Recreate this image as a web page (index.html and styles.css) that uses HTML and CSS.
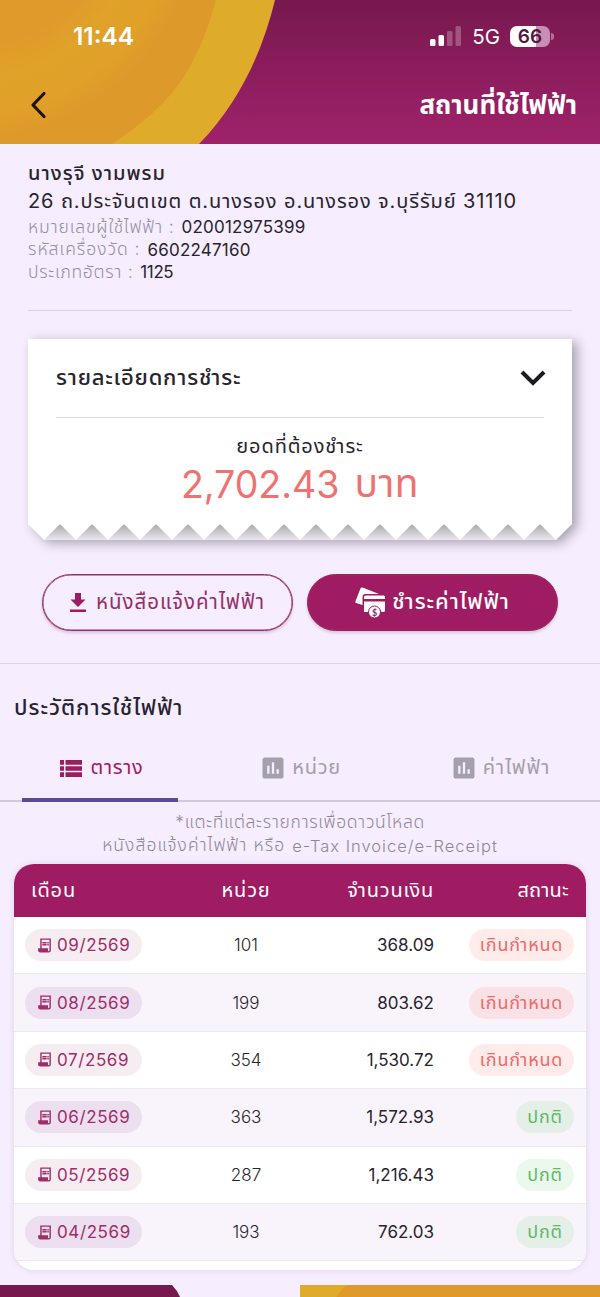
FILE: index.html
```html
<!DOCTYPE html>
<html lang="th">
<head>
<meta charset="utf-8">
<title>สถานที่ใช้ไฟฟ้า</title>
<link rel="stylesheet" href="styles.css">
</head>
<body>
<svg class="defs" width="0" height="0">
  <symbol id="bill" viewBox="0 0 24 24"><path fill="currentColor" d="M6 2H21V19Q21 22 18 22H6Q3 22 3 19V16H6ZM8 4V16H17V19Q17 20 18 20T19 19V4ZM9 7h6v2H9zm7 0h2v2h-2zm-7 3h6v2H9zm7 0h2v2h-2z"/></symbol>
  <symbol id="chart" viewBox="0 0 24 24"><path fill="currentColor" d="M19 3H5c-1.100 0-2 .9-2 2v14c0 1.100.9 2 2 2h14c1.100 0 2-.9 2-2V5c0-1.100-.9-2-2-2M9 17H7v-7h2zm4 0h-2V7h2zm4 0h-2v-4h2z"/></symbol>
</svg>
<header class="header">
  <svg class="header-art" width="600" height="144" viewBox="0 0 600 144">
    <defs>
      <linearGradient id="plum" x1="0" y1="0" x2="0" y2="1"><stop offset="0" stop-color="#77184f"/><stop offset="1" stop-color="#a0226a"/></linearGradient>
      <radialGradient id="amber" gradientUnits="userSpaceOnUse" cx="-30" cy="-90" r="300"><stop offset="0" stop-color="#df9c2a"/><stop offset=".46" stop-color="#df9a2b"/><stop offset=".56" stop-color="#e0a229"/><stop offset=".68" stop-color="#e0a029"/><stop offset=".76" stop-color="#de992b"/></radialGradient>
    </defs>
    <rect width="600" height="144" fill="url(#plum)"/>
    <path d="M0 0H275C262 53 239 103 199 144H0Z" fill="#dfab2b"/>
    <path d="M0 0H216C208 28 199 53 185 75C170 99 146 122 112 144H0Z" fill="url(#amber)"/>
  </svg>
  <div class="status">
    <span class="clock">11:44</span>
    <span class="indicators">
      <svg width="31" height="20" viewBox="0 0 31 20" fill="#fff"><rect x="0" y="13" width="5.500" height="7" rx="1.500"/><rect x="8.500" y="9" width="5.500" height="11" rx="1.500"/><rect x="17" y="5" width="5.500" height="15" rx="1.500" opacity=".25"/><rect x="25.500" y="0" width="5.500" height="20" rx="1.500" opacity=".25"/></svg>
      <span class="net">5G</span>
      <span class="battery">66</span><i class="cap"></i>
    </span>
  </div>
  <div class="titlebar">
    <svg width="18" height="28" viewBox="0 0 18 28"><path d="M14 2.500 3 14l11 11.500" fill="none" stroke="#1d1309" stroke-width="3.200" stroke-linecap="round" stroke-linejoin="round"/></svg>
    <h1 class="t-title">สถานที่ใช้ไฟฟ้า</h1>
  </div>
</header>
<section class="customer">
  <div class="name"><span class="t-name">นางรุจี งามพรม</span></div>
  <div class="address"><span class="t-addr">26 ถ.ประจันตเขต ต.นางรอง อ.นางรอง จ.บุรีรัมย์ 31110</span></div>
  <div class="field"><span class="label l1">หมายเลขผู้ใช้ไฟฟ้า :</span><b class="v1">020012975399</b></div>
  <div class="field"><span class="label l2">รหัสเครื่องวัด :</span><b class="v2">6602247160</b></div>
  <div class="field"><span class="label l3">ประเภทอัตรา :</span><b class="v3">1125</b></div>
</section>
<section class="receipt">
  <svg class="paper" width="544" height="202" viewBox="0 0 544 202">
    <defs>
      <linearGradient id="shade" x1="0" y1="0" x2="0" y2="1"><stop offset="0" stop-color="#a9a7ac"/><stop offset=".4" stop-color="#c4c1c7"/><stop offset="1" stop-color="#ece5f2"/></linearGradient>
      <pattern id="teeth" width="32" height="16" patternUnits="userSpaceOnUse" y="185"><path d="M0 0H32L16 16Z" fill="#fff"/></pattern>
    </defs>
    <rect x="16" y="185" width="512" height="16" fill="url(#shade)"/>
    <rect width="544" height="185.500" fill="#fff"/>
    <rect y="185" width="544" height="16" fill="url(#teeth)"/>
  </svg>
  <div class="receipt-body">
    <div class="receipt-head"><h2 class="t-detail">รายละเอียดการชำระ</h2>
      <svg class="chev" width="26" height="16" viewBox="0 0 26 16"><path d="m2 2 11 11L24 2" fill="none" stroke="#1c1b1f" stroke-width="4"/></svg></div>
    <div class="due"><span class="t-due">ยอดที่ต้องชำระ</span></div>
    <div class="amount"><span class="t-num">2,702.43</span><span class="t-baht">บาท</span></div>
  </div>
</section>
<div class="actions">
  <button class="btn outline"><svg width="16" height="19" viewBox="0 0 16 19" fill="#a01c62"><path d="M5 0h6v6.500h4.500L8 14 .5 6.500H5zM0 16.500h16V19H0z"/></svg><span class="t-bill">หนังสือแจ้งค่าไฟฟ้า</span></button>
  <button class="btn solid"><svg width="32" height="31" viewBox="0 0 32 31"><path d="M7.500.5 24 7H10.500Q7.500 7 7.500 10V18L1 16Q0 15.500.4 14.500L5.500 1.500Q6 .2 7.500.5M11 8.500H28.500Q30 8.500 30 10V12H9V10Q9 8.500 11 8.500M9 14.500H30V23.500Q30 25 28.500 25H26.500A7 7 0 0 0 13.500 25H9Z" fill="#fff"/><circle cx="19.500" cy="25" r="6" fill="#fff" stroke="#a01c62"/><text x="19.500" y="28.500" class="coin" text-anchor="middle">$</text></svg><span class="t-pay">ชำระค่าไฟฟ้า</span></button>
</div>
<section class="history">
  <h2><span class="t-hist">ประวัติการใช้ไฟฟ้า</span></h2>
  <nav class="tabs">
    <a class="tab active"><svg width="22" height="17" viewBox="0 0 22 17" fill="#a01c62"><path d="M0 0h4v4.700H0zM5.500 0H22v4.700H5.500zM0 6.200h4v4.600H0zM5.500 6.200H22v4.600H5.500zM0 12.300h4V17H0zM5.500 12.300H22V17H5.500z"/></svg><span class="t-tab1">ตาราง</span></a>
    <a class="tab"><svg class="ch" width="28" height="28"><use href="#chart"/></svg><span class="t-tab2">หน่วย</span></a>
    <a class="tab"><svg class="ch" width="28" height="28"><use href="#chart"/></svg><span class="t-tab3">ค่าไฟฟ้า</span></a>
  </nav>
  <div class="note"><span class="t-note1">*แตะที่แต่ละรายการเพื่อดาวน์โหลด</span></div>
  <div class="note"><span class="t-note2">หนังสือแจ้งค่าไฟฟ้า หรือ</span> <span class="t-note3">e-Tax Invoice/e-Receipt</span></div>
  <div class="table">
    <div class="row thead"><span><i class="h1">เดือน</i></span><span><i class="h2">หน่วย</i></span><span><i class="h3">จำนวนเงิน</i></span><span><i class="h4">สถานะ</i></span></div>
    <div class="row"><span><b class="month"><svg width="17" height="17"><use href="#bill"/></svg>09/2569</b></span><span>101</span><span>368.09</span><span><b class="tag late">เกินกำหนด</b></span></div>
    <div class="row"><span><b class="month"><svg width="17" height="17"><use href="#bill"/></svg>08/2569</b></span><span>199</span><span>803.62</span><span><b class="tag late">เกินกำหนด</b></span></div>
    <div class="row"><span><b class="month"><svg width="17" height="17"><use href="#bill"/></svg>07/2569</b></span><span>354</span><span>1,530.72</span><span><b class="tag late">เกินกำหนด</b></span></div>
    <div class="row"><span><b class="month"><svg width="17" height="17"><use href="#bill"/></svg>06/2569</b></span><span>363</span><span>1,572.93</span><span><b class="tag ok">ปกติ</b></span></div>
    <div class="row"><span><b class="month"><svg width="17" height="17"><use href="#bill"/></svg>05/2569</b></span><span>287</span><span>1,216.43</span><span><b class="tag ok">ปกติ</b></span></div>
    <div class="row"><span><b class="month"><svg width="17" height="17"><use href="#bill"/></svg>04/2569</b></span><span>193</span><span>762.03</span><span><b class="tag ok">ปกติ</b></span></div>
  </div>
</section>
<footer class="footer">
  <svg width="600" height="12" viewBox="0 0 600 12"><path d="M0 0H172Q177 5 180 12H0Z" fill="#77184f"/><path d="M300 0H600V12H300Z" fill="#e09a29"/><path d="M300 0H346L336 12H300Z" fill="#dfab2b"/></svg>
</footer>
</body>
</html>
```
FILE: styles.css
```css
* { box-sizing: border-box; }
body {
  margin: 0; width: 600px; height: 1297px; overflow: hidden;
  display: flex; flex-direction: column;
  background: #f6edfe; color: #28242e;
  font-family: Inter, "Noto Sans Thai", "Noto Sans", sans-serif;
}
h1, h2 { margin: 0; font-weight: 500; }
b, i { font-weight: inherit; font-style: normal; }
span, i, b { white-space: nowrap; }
.defs { position: absolute; }
.header { position: relative; height: 144px; flex: none; color: #fff; }
.header-art { position: absolute; inset: 0; }
.status { position: relative; display: flex; justify-content: space-between; align-items: center; height: 72px; padding: 0 46px 0 73px; }
.clock { font-size: 24.500px; font-weight: 600; }
.indicators { display: flex; align-items: center; }
.net { font-size: 20.500px; margin: 0 10px 0 11px; }
.battery { width: 40px; height: 21px; border-radius: 7px; background: linear-gradient(90deg, #fff 66%, #c98eb4 66%); color: #55183d; font-size: 19px; font-weight: 600; line-height: 21px; text-align: center; }
.cap { width: 3px; height: 7px; margin-left: 1px; border-radius: 0 3px 3px 0; background: #b0719a; }
.titlebar { position: relative; display: flex; justify-content: space-between; align-items: center; height: 66px; padding: 0 23px 0 30px; }
.t-title { font-size: 26px; font-weight: 700; padding-top: 2px; }
.customer { margin: 0 28px; height: 167px; flex: none; padding-top: 16px; border-bottom: 1px solid #ddcfdf; }
.customer > div { display: flex; align-items: center; }
.name { height: 27px; font-size: 20px; font-weight: 500; letter-spacing: 1px; }
.address { height: 29px; font-size: 20px; letter-spacing: .9px; }
.field { height: 22.500px; font-size: 17.500px; gap: 7px; }
.label { color: #9088a0; color: #958d9b; font-weight: 300; }
.l1 { letter-spacing: .85px; }
.l2 { letter-spacing: 1px; }
.l3 { letter-spacing: .7px; }
.field b { font-size: 17px; letter-spacing: .2px; }
.field .v3 { letter-spacing: -.4px; }
.receipt { position: relative; margin: 28px 28px 0; height: 202px; flex: none; }
.paper { position: absolute; overflow: visible; filter: drop-shadow(5px 3px 6px rgba(60, 50, 70, .42)); }
.receipt-body { position: relative; padding: 0 28px; display: flex; flex-direction: column; align-items: center; }
.receipt-head { align-self: stretch; height: 79px; display: flex; align-items: center; justify-content: space-between; border-bottom: 1px solid #dcdcdc; }
.chev { margin-right: -2px; }
.t-detail { font-size: 22px; letter-spacing: .8px; }
.due { height: 30px; margin-top: 14px; display: flex; align-items: center; font-size: 20px; letter-spacing: .9px; }
.amount { height: 44px; display: flex; align-items: center; gap: 15px; font-size: 37.500px; color: #ee7270; }
.t-baht { font-size: 39px; letter-spacing: .5px; padding-top: 2px; }
.actions { display: flex; gap: 14px; padding: 33px 42px 0; height: 123px; border-bottom: 1px solid #ddd2e3; flex: none; }
.btn { width: 251px; height: 57px; border-radius: 29px; display: flex; align-items: center; justify-content: center; border: 1px solid #943067; padding: 0; background: #f6edfe; color: #943067; font-family: inherit; font-size: 20.500px; letter-spacing: 1px; box-shadow: inset 0 0 0 .5px #943067, 0 2px 3px rgba(80, 40, 90, .2); }
.outline { gap: 10px; }
.solid { gap: 5px; background: #a01c62; border-color: #a01c62; color: #fff; font-size: 22px; font-weight: 500; letter-spacing: .95px; }
.coin { font: 700 9px Lato; letter-spacing: 0; fill: #a01c62; }
.history { display: flex; flex-direction: column; }
.history h2 { height: 70px; padding: 28px 14px 0; font-size: 22px; line-height: 30px; letter-spacing: 1px; }
.tabs { display: flex; height: 68px; border-bottom: 2px solid #d2c8da; }
.tab { width: 200px; display: flex; align-items: center; justify-content: center; gap: 9px; font-size: 20px; letter-spacing: .7px; color: #a3a0a9; padding: 2px 0 0 3px; }
.t-tab3 { letter-spacing: 1px; }
.tab .ch { margin: 0 -4px 0 -3px; }
.tab.active { width: 156px; margin: 0 22px; height: 68px; padding: 4px 0 0 3px; border-bottom: 4px solid #5e4b97; border-radius: 4px 4px 0 0; color: #a01c62; }
.note { height: 23px; display: flex; align-items: center; justify-content: center; gap: 7px; font-size: 17.500px; color: #8e8896; font-weight: 300; letter-spacing: .65px; }
.t-note2 { letter-spacing: 1.050px; }
.t-note3 { font-size: 16.500px; letter-spacing: 1px; }
.tabs + .note { margin-top: 9px; }
.table { margin: 7px 14px 0; height: 406px; background: #fff; border-radius: 20px; overflow: hidden; box-shadow: 0 0 6px rgba(120, 90, 150, .18); }
.row { display: grid; grid-template-columns: 174px 116px 130px 152px; height: 57.400px; align-items: center; border-bottom: 1px solid #eee7f1; font-size: 17px; }
.row > span { display: flex; }
.row > :nth-child(1) { padding-left: 11px; }
.row > :nth-child(2) { justify-content: center; }
.row:not(.thead) > :nth-child(2) { font-weight: 300; }
.row > :nth-child(3) { justify-content: flex-end; }
.row > :nth-child(4) { justify-content: flex-end; padding-right: 12px; }
.row:nth-child(odd) { background: #f9f3fb; }
.row.thead { height: 53px; background: #a01c62; color: #fff; border: 0; font-size: 20px; letter-spacing: .8px; padding-top: 1px; }
.thead > :nth-child(1) { padding-left: 17px; }
.thead > :nth-child(4) { padding-right: 17px; letter-spacing: .2px; }
.month { display: flex; align-items: center; gap: 4px; width: 117px; height: 32px; border-radius: 16px; background: #f6edf2; color: #a02c68; padding-left: 11px; letter-spacing: .6px; }
.row:nth-child(odd) .month { background: #ecdff0; }
.tag { height: 32px; border-radius: 16px; display: flex; align-items: center; justify-content: center; font-size: 18px; letter-spacing: .8px; padding-top: 1px; }
.late { width: 105px; background: #feebea; color: #ec6b69; }
.row:nth-child(odd) .late { background: #f9e1e6; }
.ok { width: 58px; background: #ebf8ec; color: #5fb866; }
.row:nth-child(odd) .ok { background: #e3efe7; }
.footer { margin-top: 15px; height: 12px; flex: none; }
.footer svg { display: block; }
```
